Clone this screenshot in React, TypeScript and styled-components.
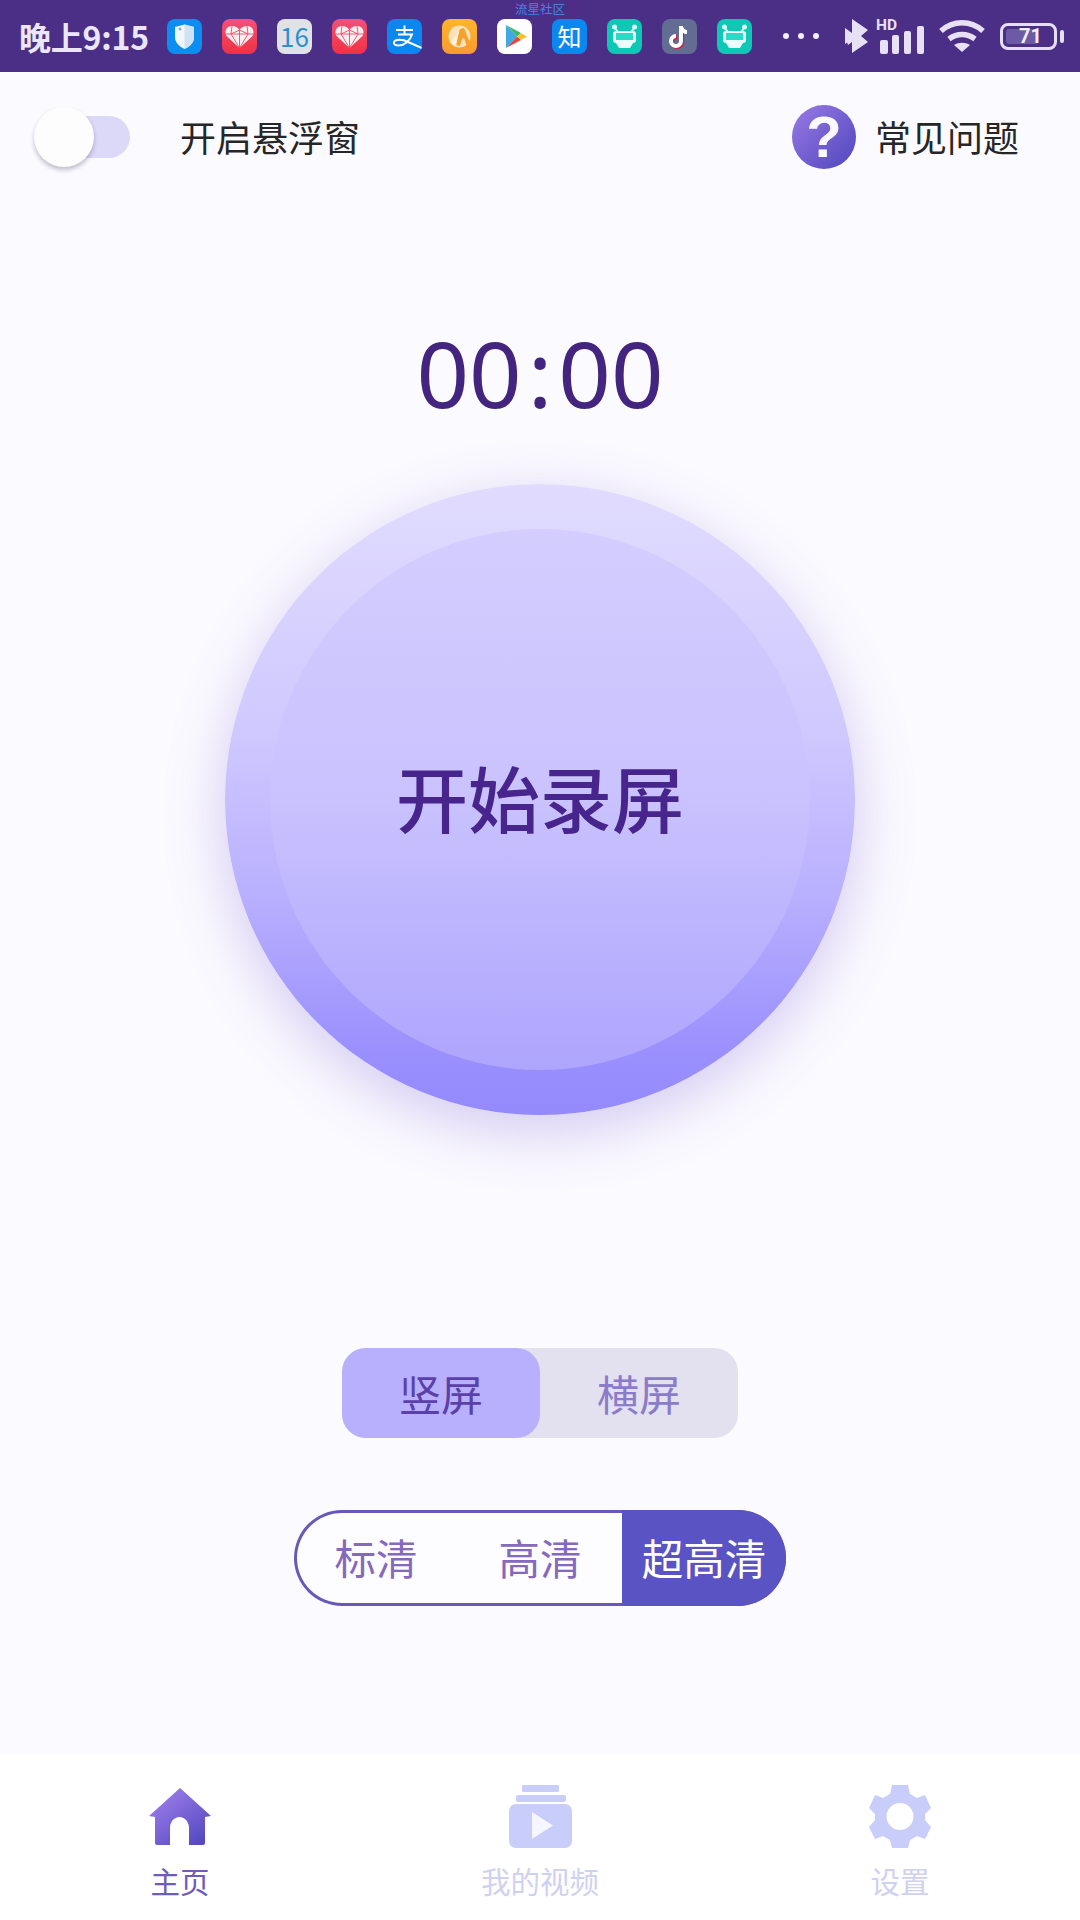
import * as React from "react";
import styled, { createGlobalStyle } from "styled-components";

const GlobalStyle = createGlobalStyle`
  html, body {
    margin: 0;
    padding: 0;
    background: #fbfaff;
  }
  * {
    box-sizing: border-box;
  }
`;

const cjk = `"Noto Sans CJK SC", "Noto Sans", sans-serif`;

const Page = styled.div`
  position: relative;
  width: 1080px;
  height: 1920px;
  display: flex;
  flex-direction: column;
  overflow: hidden;
  background: #fbfaff;
  font-family: ${cjk};
`;

/* status bar */
const StatusBar = styled.div`
  position: relative;
  height: 72px;
  flex: none;
  display: flex;
  align-items: center;
  padding-left: 19px;
  background: #4b2f86;
`;

const Clock = styled.span`
  width: 148px;
  flex: none;
  font-size: 32px;
  font-weight: 700;
  letter-spacing: -0.2px;
  color: #ece7f8;
  white-space: nowrap;
`;

const NotifyRow = styled.div`
  display: flex;
  gap: 20px;
`;

const AppIcon = styled.div<{ $bg: string }>`
  width: 35px;
  height: 35px;
  border-radius: 8px;
  overflow: hidden;
  background: ${(p) => p.$bg};
  display: flex;
  align-items: center;
  justify-content: center;
`;

const AppIconText = styled.span<{ $color: string; $size: number }>`
  font-size: ${(p) => p.$size}px;
  line-height: 1;
  color: ${(p) => p.$color};
`;

const Overlay = styled.span`
  position: absolute;
  top: 2px;
  left: 515px;
  font-size: 12.5px;
  line-height: 13px;
  white-space: nowrap;
  color: #4a80e2;
`;

const Dots = styled.div`
  display: flex;
  gap: 9px;
  margin-left: 31px;
  margin-right: 26px;
`;

const Dot = styled.i`
  width: 6px;
  height: 6px;
  border-radius: 50%;
  background: #f3effb;
`;

const SystemIcons = styled.div`
  display: flex;
  align-items: center;
`;

const SignalBox = styled.div`
  position: relative;
  width: 44px;
  height: 35px;
  margin: 0 15px 0 12px;
`;

const HdLabel = styled.span`
  position: absolute;
  left: -4px;
  top: -2px;
  font-family: Roboto, sans-serif;
  font-weight: 700;
  font-size: 15.5px;
  line-height: 16px;
  color: #e8e1f6;
`;

const Battery = styled.div`
  position: relative;
  width: 57px;
  height: 27px;
  margin-left: 15px;
  border: 3px solid #e6dff5;
  border-radius: 8px;
  padding: 3px;
`;

const BatteryLevel = styled.div`
  width: 71%;
  height: 100%;
  border-radius: 3px;
  background: #6d5aa4;
`;

const BatteryText = styled.span`
  position: absolute;
  inset: 0;
  display: flex;
  align-items: center;
  justify-content: center;
  padding-left: 4px;
  font-family: Roboto, sans-serif;
  font-weight: 700;
  font-size: 20px;
  color: #f1ecfa;
`;

const BatteryNub = styled.i`
  position: absolute;
  right: -10px;
  top: 4px;
  width: 4px;
  height: 13px;
  border-radius: 2px;
  background: #e6dff5;
`;

/* header row */
const TopRow = styled.div`
  height: 130px;
  flex: none;
  display: flex;
  align-items: center;
  padding: 0 61px 0 34px;
`;

const Switch = styled.div`
  position: relative;
  width: 96px;
  height: 60px;
  flex: none;
  display: flex;
  align-items: center;
  justify-content: flex-end;
`;

const SwitchTrack = styled.div`
  width: 78px;
  height: 42px;
  border-radius: 21px;
  background: #dcd8f8;
`;

const SwitchThumb = styled.div`
  position: absolute;
  left: 0;
  top: 0;
  width: 60px;
  height: 60px;
  border-radius: 50%;
  background: #fdfdfd;
  box-shadow: 0 3px 4px rgba(60, 50, 80, 0.3);
`;

const RowLabel = styled.span`
  padding-bottom: 2px;
  font-size: 36px;
  font-weight: 400;
  color: #262626;
  white-space: nowrap;
`;

const FloatLabel = styled(RowLabel)`
  margin-left: 50px;
`;

const Help = styled.div`
  margin-left: auto;
  display: flex;
  align-items: center;
  gap: 19px;
`;

const HelpBadge = styled.div`
  width: 64px;
  height: 64px;
  border-radius: 50%;
  background: linear-gradient(135deg, #9a7ae6, #5046bd);
  display: flex;
  align-items: center;
  justify-content: center;
  font-family: "Liberation Sans", sans-serif;
  font-weight: 700;
  font-size: 58px;
  line-height: 1;
  color: #fbf8ff;
`;

/* timer and record button */
const Timer = styled.div`
  margin-top: 117px;
  height: 115px;
  padding-bottom: 9px;
  flex: none;
  display: flex;
  align-items: center;
  justify-content: center;
  font-family: "Noto Sans", sans-serif;
  font-weight: 400;
  font-size: 92px;
  color: #43257f;
`;

const TimerColon = styled.span`
  margin: 0 6px;
`;

const RecordOuter = styled.div`
  margin: 50px auto 0;
  width: 630px;
  height: 631px;
  flex: none;
  border-radius: 50%;
  display: flex;
  align-items: center;
  justify-content: center;
  background: linear-gradient(180deg, #e1dcfe 0%, #cfc8fe 40%, #b9b0fe 65%, #9a8ffd 90%, #958afc 100%);
  box-shadow: 0 16px 60px rgba(120, 90, 210, 0.3);
`;

const RecordInner = styled.div`
  width: 540px;
  height: 541px;
  padding-bottom: 8px;
  border-radius: 50%;
  display: flex;
  align-items: center;
  justify-content: center;
  background: linear-gradient(180deg, #d4cdfe 0%, #c9c2fe 50%, #aea5fd 100%);
  font-size: 72px;
  font-weight: 500;
  color: #47258c;
`;

/* pickers */
const Orientation = styled.div`
  margin: 233px auto 0;
  width: 396px;
  height: 90px;
  flex: none;
  display: grid;
  grid-template-columns: 1fr 1fr;
  border-radius: 24px;
  background: #e3e0f0;
`;

const OrientationItem = styled.div<{ $active?: boolean }>`
  display: flex;
  align-items: center;
  justify-content: center;
  padding-bottom: 2px;
  border-radius: 24px;
  font-size: 42px;
  background: ${(p) => (p.$active ? "#b8b0fc" : "transparent")};
  color: ${(p) => (p.$active ? "#5b40a9" : "#8a7cca")};
`;

const Quality = styled.div`
  margin: 72px auto 0;
  width: 492px;
  height: 96px;
  flex: none;
  display: grid;
  grid-template-columns: repeat(3, 1fr);
  border-radius: 48px;
  overflow: hidden;
  background: #fdfcff;
  box-shadow: inset 0 0 0 3px #6a58b8;
`;

const QualityItem = styled.div<{ $active?: boolean }>`
  display: flex;
  align-items: center;
  justify-content: center;
  padding-bottom: 2px;
  font-size: 41.5px;
  background: ${(p) => (p.$active ? "#5a53c3" : "transparent")};
  color: ${(p) => (p.$active ? "#fff" : "#8469bd")};
`;

/* bottom tabs */
const TabBar = styled.div`
  margin-top: auto;
  height: 166px;
  flex: none;
  display: grid;
  grid-template-columns: repeat(3, 1fr);
  background: #fff;
`;

const Tab = styled.div<{ $active?: boolean }>`
  display: flex;
  flex-direction: column;
  align-items: center;
  padding-top: 30px;
  font-size: 29.5px;
  line-height: 40px;
  color: ${(p) => (p.$active ? "#6f5cb8" : "#cfd1f1")};

  svg {
    margin-bottom: 12px;
  }
`;

const notifyShield = (
  <svg width="35" height="35" viewBox="0 0 35 35">
    <path d="M17.5 5.500l9.500 2.500v10c0 6-4.500 9.500-9.500 12-5-2.500-9.500-6-9.500-12V8z" fill="#f2f7fc" />
    <path d="M17.500 5.500l9.500 2.500v10c0 6-4.500 9.500-9.500 12z" fill="#cfe3f3" />
    <path d="M11.500 10h3M13 8.500v3" stroke="#5a9bd0" strokeWidth="1" />
  </svg>
);

const heart = (
  <svg width="35" height="35" viewBox="0 0 35 35">
    <path d="M17.500 29L4.500 17C2 13 4 7 10 7c3 0 6 1.500 7.500 4C19 8.500 22 7 25 7c6 0 8 6 5.500 10z" fill="#fdeef0" />
    <path d="M17.500 11v18M3 15h29M10 7l-1 8 8.500 14 8.500-14-1-8M9 15l8.500-4 8.500 4" stroke="#ee4a66" strokeWidth="0.900" fill="none" />
  </svg>
);

const alipay = (
  <svg width="35" height="35" viewBox="0 0 35 35" fill="none" stroke="#fff" strokeWidth="2">
    <path d="M9 11h17M17.500 6.500V15M11 15.500h14C23 22 17 26.500 11.500 26.500 8 26.500 6.500 25 7 23c1-3 9-3 14 0l14 6" />
  </svg>
);

const orangeApp = (
  <svg width="35" height="35" viewBox="0 0 35 35">
    <circle cx="17.500" cy="17.500" r="11" fill="#fce2b8" />
    <path d="M13 26l5-16 4-1 8 20-4 1-4-11-2 1-2 7z" fill="#f7a02c" />
    <path d="M17 12l-8 12 5 3z" fill="#fff3dd" />
  </svg>
);

const playStore = (
  <svg width="35" height="35" viewBox="0 0 35 35">
    <path d="M9 6l11 11.500L9 29z" fill="#3fa9e8" />
    <path d="M9 6l15 8-4 3.500z" fill="#3fb66f" />
    <path d="M9 29l15-8-4-3.500z" fill="#e4453f" />
    <path d="M24 14l6 3.500-6 3.500-4-3.500z" fill="#fbc02d" />
  </svg>
);

const miBot = (
  <svg width="35" height="35" viewBox="0 0 35 35">
    <circle cx="7.500" cy="8" r="2.500" fill="#d8fbf6" />
    <circle cx="27.500" cy="8" r="2.500" fill="#d8fbf6" />
    <path d="M7 8l4 5h13l4-5" stroke="#d8fbf6" strokeWidth="2" fill="none" />
    <path d="M9 12h17c2 0 3 1 3 3v6c0 2-1 3-3 3l-3 5H12l-3-5c-2 0-3-1-3-3v-6c0-2 1-3 3-3z" fill="#e9fdfa" />
    <rect x="9" y="14" width="17" height="7" fill="#2ed8c6" />
  </svg>
);

const tiktok = (
  <svg width="35" height="35" viewBox="0 0 35 35" fill="none" strokeWidth="4">
    <path d="M19 7v15a5 5 0 1 1-5-5" stroke="#d3183f" transform="translate(1 1)" />
    <path d="M19 7v15a5 5 0 1 1-5-5M19 8c1 3 3 5 6 5" stroke="#fff" />
  </svg>
);

const bluetooth = (
  <svg width="23" height="34" viewBox="0 0 23 34">
    <path d="M7 0l16 11-7 6 7 6L7 34V23l-4 3-3-9 3-1 4 0V13z" fill="#e8e1f6" />
    <path d="M0 9l7 5v6l-7 5z" fill="#e8e1f6" />
  </svg>
);

const signalBars = (
  <svg width="44" height="35" viewBox="0 0 44 35" fill="#e8e1f6">
    <rect x="0" y="21" width="8" height="14" rx="2" />
    <rect x="12" y="16" width="7" height="19" rx="2" />
    <rect x="24" y="12" width="7" height="23" rx="2" />
    <rect x="37" y="7" width="7" height="28" rx="2" />
  </svg>
);

const wifi = (
  <svg width="46" height="34" viewBox="0 0 46 34" fill="none" stroke="#e8e1f6" strokeWidth="5.500">
    <path d="M2 12C14 1 32 1 44 12" />
    <path d="M10 20c8-6 18-6 26 0" />
    <path d="M23 33l-8-7c5-3 11-3 16 0z" fill="#e8e1f6" stroke="none" />
  </svg>
);

const homeIcon = (
  <svg width="62" height="64" viewBox="0 0 62 64">
    <defs>
      <linearGradient id="homeFill" x1="0.15" y1="0.15" x2="0.85" y2="0.95">
        <stop offset="0" stopColor="#9a7be8" />
        <stop offset="1" stopColor="#5549c0" />
      </linearGradient>
    </defs>
    <path
      d="M31 4L62 32l-6 1v26a2 2 0 0 1-2 2H40V44c0-6-4-11-9.500-11S21 38 21 44v17H8a2 2 0 0 1-2-2V33l-6-1z"
      fill="url(#homeFill)"
    />
  </svg>
);

const videoIcon = (
  <svg width="63" height="64" viewBox="0 0 63 64" fill="#c9cdf9">
    <rect x="13" y="1" width="37" height="7" rx="1.500" />
    <rect x="7" y="11" width="50" height="7" rx="2" />
    <rect x="0" y="20" width="63" height="44" rx="7" />
    <path d="M23 28l21 13.500L23 55z" fill="#f6f7fe" />
  </svg>
);

const gearIcon = (
  <svg width="62" height="64" viewBox="0 0 62 64">
    <path
      fillRule="evenodd"
      fill="#c9cdf9"
      d="M23 1h16l2 9 7 4 8-3 6 13-6 6v6l6 7-6 12-8-3-7 4-2 8H23l-2-8-7-4-8 3-6-12 6-7v-6l-6-6 6-13 8 3 7-4zM31 19a13 13 0 1 0 0 27 13 13 0 0 0 0-27z"
    />
  </svg>
);

export default function App() {
  return (
    <Page>
      <GlobalStyle />
      <StatusBar>
        <Clock>晚上9:15</Clock>
        <NotifyRow>
          <AppIcon $bg="#0c8df2">{notifyShield}</AppIcon>
          <AppIcon $bg="linear-gradient(180deg,#f0527a,#f3303f)">{heart}</AppIcon>
          <AppIcon $bg="#dfe3e6">
            <AppIconText $color="#2e8fd0" $size={26}>16</AppIconText>
          </AppIcon>
          <AppIcon $bg="linear-gradient(180deg,#f0527a,#f3303f)">{heart}</AppIcon>
          <AppIcon $bg="#0c87ef">{alipay}</AppIcon>
          <AppIcon $bg="linear-gradient(180deg,#fdb52c,#f79a30)">{orangeApp}</AppIcon>
          <AppIcon $bg="#fff">{playStore}</AppIcon>
          <AppIcon $bg="#0c87ef">
            <AppIconText $color="#fff" $size={24}>知</AppIconText>
          </AppIcon>
          <AppIcon $bg="#0cc8b4">{miBot}</AppIcon>
          <AppIcon $bg="#636c93">{tiktok}</AppIcon>
          <AppIcon $bg="#0cc8b4">{miBot}</AppIcon>
        </NotifyRow>
        <Dots>
          <Dot />
          <Dot />
          <Dot />
        </Dots>
        <SystemIcons>
          {bluetooth}
          <SignalBox>
            {signalBars}
            <HdLabel>HD</HdLabel>
          </SignalBox>
          {wifi}
          <Battery>
            <BatteryLevel />
            <BatteryText>71</BatteryText>
            <BatteryNub />
          </Battery>
        </SystemIcons>
        <Overlay>流星社区</Overlay>
      </StatusBar>

      <TopRow>
        <Switch>
          <SwitchTrack />
          <SwitchThumb />
        </Switch>
        <FloatLabel>开启悬浮窗</FloatLabel>
        <Help>
          <HelpBadge>?</HelpBadge>
          <RowLabel>常见问题</RowLabel>
        </Help>
      </TopRow>

      <Timer>
        00<TimerColon>:</TimerColon>00
      </Timer>

      <RecordOuter>
        <RecordInner>开始录屏</RecordInner>
      </RecordOuter>

      <Orientation>
        <OrientationItem $active>竖屏</OrientationItem>
        <OrientationItem>横屏</OrientationItem>
      </Orientation>

      <Quality>
        <QualityItem>标清</QualityItem>
        <QualityItem>高清</QualityItem>
        <QualityItem $active>超高清</QualityItem>
      </Quality>

      <TabBar>
        <Tab $active>
          {homeIcon}
          主页
        </Tab>
        <Tab>
          {videoIcon}
          我的视频
        </Tab>
        <Tab>
          {gearIcon}
          设置
        </Tab>
      </TabBar>
    </Page>
  );
}
